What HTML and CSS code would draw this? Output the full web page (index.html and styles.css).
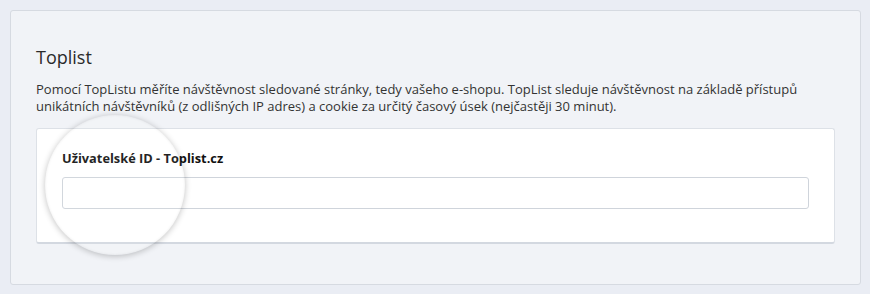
FILE: index.html
```html
<!DOCTYPE html>
<html lang="cs">
<head>
<meta charset="utf-8">
<link rel="stylesheet" href="styles.css">
</head>
<body>
<div class="panel">
  <h2 class="title">Toplist</h2>
  <p class="desc">Pomocí TopListu měříte návštěvnost sledované stránky, tedy vašeho e-shopu. TopList sleduje návštěvnost na základě přístupů unikátních návštěvníků (z odlišných IP adres) a cookie za určitý časový úsek (nejčastěji 30 minut).</p>
  <div class="card">
    <label class="label" for="tid">Uživatelské ID - Toplist.cz</label>
    <input class="input" id="tid" type="text">
  </div>
</div>
<div class="lens"></div>
</body>
</html>
```
FILE: styles.css
```css
html, body { margin: 0; padding: 0; }
body {
  background: #eaedf4;
  font-family: "Open Sans", "Noto Sans", sans-serif;
  color: #333;
  width: 870px;
  height: 294px;
  overflow: hidden;
  position: relative;
}
.panel {
  margin: 10px 9px 0 10px;
  height: 275px;
  box-sizing: border-box;
  background: #f1f3f7;
  border: 1px solid #d6dae1;
  border-radius: 3px;
  padding: 33px 25px 0 25px;
}
.title {
  margin: 0;
  font-size: 18px;
  font-weight: 400;
  line-height: 26px;
  color: #2a2a2a;
}
.desc {
  margin: 11px 0 0 0;
  font-size: 13px;
  line-height: 17px;
  color: #333;
}
.card {
  margin-top: 13px;
  height: 116px;
  box-sizing: border-box;
  background: #fff;
  border: 1px solid #dde1e7;
  border-bottom: 2px solid #d3d8e0;
  border-radius: 3px;
  padding: 21px 25px 0 25px;
  display: flex;
  flex-direction: column;
}
.label {
  font-size: 12.8px;
  font-weight: 700;
  color: #111;
  line-height: 17px;
}
.input {
  margin-top: 10px;
  height: 32px;
  box-sizing: border-box;
  border: 1px solid #cfd4db;
  border-radius: 3px;
  background: #fff;
  outline: none;
  font: inherit;
}
.lens {
  position: absolute;
  left: 45px;
  top: 115px;
  width: 140px;
  height: 140px;
  border-radius: 50%;
  background: rgba(255,255,255,0.08);
  box-shadow: 0 1px 6px rgba(0,0,0,0.24), inset 0 0 3px rgba(0,0,0,0.08);
  pointer-events: none;
}
```
